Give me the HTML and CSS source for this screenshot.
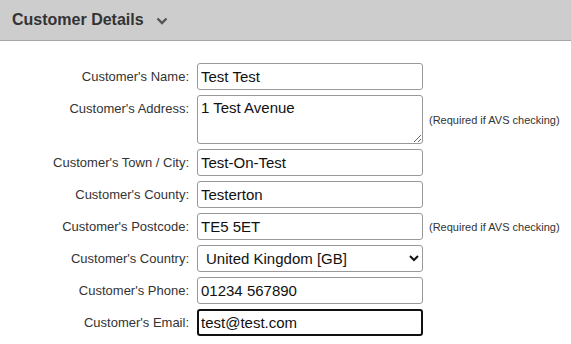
FILE: index.html
```html
<!DOCTYPE html>
<html lang="en">
<head>
  <meta charset="UTF-8" />
  <title>Customer Details</title>
  <link rel="stylesheet" href="styles.css">
</head>
<body>
  <div class="panel-head">
    <h2>Customer Details</h2>
    <svg class="chevron" width="12" height="8" viewBox="0 0 12 8"><path d="M1.5 1.5 L6 6 L10.5 1.5" fill="none" stroke="#555" stroke-width="2.4"/></svg>
  </div>

  <form class="details">
    <label for="name">Customer's Name:</label>
    <input type="text" id="name" value="Test Test" />
    <span></span>

    <label for="address">Customer's Address:</label>
    <textarea id="address">1 Test Avenue</textarea>
    <span class="hint">(Required if AVS checking)</span>

    <label for="town">Customer's Town / City:</label>
    <input type="text" id="town" value="Test-On-Test" />
    <span></span>

    <label for="county">Customer's County:</label>
    <input type="text" id="county" value="Testerton" />
    <span></span>

    <label for="postcode">Customer's Postcode:</label>
    <input type="text" id="postcode" value="TE5 5ET" />
    <span class="hint">(Required if AVS checking)</span>

    <label for="country">Customer's Country:</label>
    <select id="country">
      <option>United Kingdom [GB]</option>
      <option>United States [US]</option>
    </select>
    <span></span>

    <label for="phone">Customer's Phone:</label>
    <input type="tel" id="phone" value="01234 567890" />
    <span></span>

    <label for="email">Customer's Email:</label>
    <input type="text" id="email" class="active" value="test@test.com" />
    <span></span>
  </form>

  <script>
    var email = document.getElementById("email");
    email.focus();
    email.setSelectionRange(email.value.length, email.value.length);
  </script>
</body>
</html>
```

FILE: styles.css
```css
body {
  margin: 0;
  font-family: "Liberation Sans", Arial, sans-serif;
  background: #ffffff;
  color: #333;
}

.panel-head {
  display: flex;
  align-items: center;
  gap: 12px;
  height: 40px;
  padding: 0 12px;
  background: #cdcdcd;
  border-bottom: 1px solid #a6a6a6;
}

.panel-head h2 {
  margin: 0;
  font-size: 16px;
  font-weight: bold;
  color: #333;
}

.chevron {
  margin-top: 1px;
}

.details {
  display: grid;
  grid-template-columns: 189px 226px auto;
  column-gap: 8px;
  row-gap: 5px;
  padding-top: 22px;
}

.details label {
  text-align: right;
  font-size: 13px;
  line-height: 15px;
  padding-top: 6px;
  color: #333;
}

input,
textarea,
select {
  box-sizing: border-box;
  margin: 0;
  font-family: "Liberation Sans", Arial, sans-serif;
  font-size: 15px;
  color: #111;
  border: 1px solid #999;
  border-radius: 3px;
  background: #fff;
}

input {
  height: 27px;
  padding: 0 3px;
}

textarea {
  height: 49px;
  padding: 3px 3px;
  resize: vertical;
}

select {
  height: 27px;
  padding: 0 4px;
}

input.active,
input:focus {
  outline: none;
  border: 2px solid #111;
  padding: 0 2px;
}

.hint {
  align-self: center;
  margin-left: -2px;
  font-size: 11px;
  color: #333;
}
```
